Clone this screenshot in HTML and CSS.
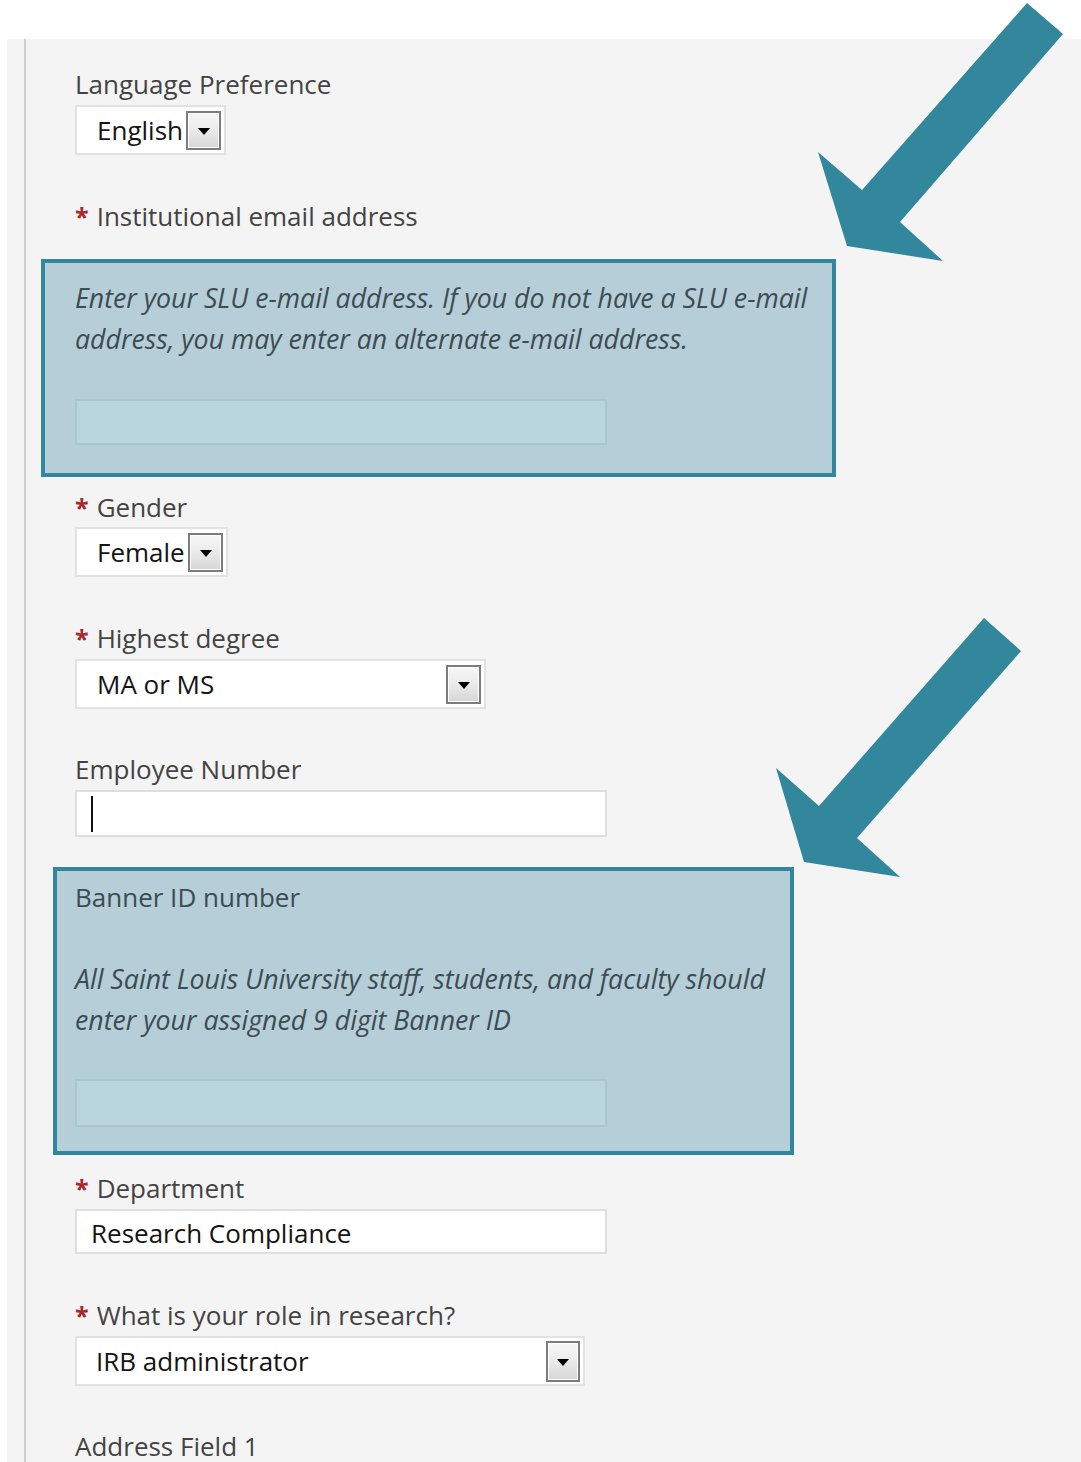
FILE: index.html
```html
<!DOCTYPE html>
<html lang="en">
<head>
<meta charset="utf-8">
<title>Profile details</title>
<link rel="stylesheet" href="styles.css">
</head>
<body>
<main class="page">
  <div class="rail">
    <div class="field field-first">
      <label class="label">Language Preference</label>
      <div class="select w-lang"><span class="select-value">English</span><span class="select-btn"></span></div>
    </div>

    <div class="field">
      <label class="label"><span class="req">*</span>Institutional email address</label>
    </div>

    <div class="callout callout-email">
      <p class="help">Enter your SLU e-mail address. If you do not have a SLU e-mail address, you may enter an alternate e-mail address.</p>
      <div class="input input-tinted input-email"></div>
    </div>

    <div class="field field-after-callout">
      <label class="label"><span class="req">*</span>Gender</label>
      <div class="select w-gender"><span class="select-value">Female</span><span class="select-btn"></span></div>
    </div>

    <div class="field">
      <label class="label"><span class="req">*</span>Highest degree</label>
      <div class="select w-degree"><span class="select-value">MA or MS</span><span class="select-btn"></span></div>
    </div>

    <div class="field field-employee">
      <label class="label">Employee Number</label>
      <div class="input input-employee"><span class="caret"></span></div>
    </div>

    <div class="callout callout-banner">
      <label class="label label-callout">Banner ID number</label>
      <p class="help help-banner">All Saint Louis University staff, students, and faculty should enter your assigned 9 digit Banner ID</p>
      <div class="input input-tinted input-banner"></div>
    </div>

    <div class="field field-dept">
      <label class="label"><span class="req">*</span>Department</label>
      <div class="input input-dept"><span class="input-value">Research Compliance</span></div>
    </div>

    <div class="field">
      <label class="label"><span class="req">*</span>What is your role in research?</label>
      <div class="select w-role"><span class="select-value select-value-role">IRB administrator</span><span class="select-btn btn-role"></span></div>
    </div>

    <div class="field field-address">
      <label class="label">Address Field 1</label>
    </div>
  </div>
</main>

<svg class="arrows" width="1081" height="1462" viewBox="0 0 1081 1462" aria-hidden="true">
  <polygon class="arrow" points="1027,3 1063,34 900,222 943,261 847,246 818,152 862,190"/>
  <polygon class="arrow" points="984,618 1021,651 857,838 900,877 804,862 776,768 819,806"/>
</svg>
</body>
</html>
```

FILE: styles.css
```css
html, body {
  margin: 0;
  padding: 0;
  overflow: hidden;
}

body {
  background: #ffffff;
  font-family: "Open Sans", "Noto Sans", sans-serif;
  color: #3f3f3f;
  position: relative;
  height: 1462px;
}

.page {
  margin: 39px 0 0 7px;
  background: #f4f4f4;
  padding: 0 0 0 17px;
  height: calc(1462px - 39px);
}

.rail {
  border-left: 2px solid #cfcfcf;
  padding: 28px 0 60px 49px;
  height: 100%;
  box-sizing: border-box;
}

.field {
  margin-top: 44px;
}

.field-first {
  margin-top: 0;
}

.label {
  display: block;
  font-size: 26px;
  line-height: 34px;
  color: #434343;
}

.req {
  color: #a8262c;
  font-size: 25px;
  font-weight: 700;
  line-height: 1;
  margin-right: 8px;
}

/* drop-down lists */
.select {
  display: flex;
  align-items: center;
  box-sizing: border-box;
  height: 50px;
  margin-top: 4px;
  border: 2px solid #e2e2e2;
  background: #ffffff;
  padding: 0 3px 0 20px;
}

.select-value {
  flex: 1;
  font-size: 26px;
  color: #141414;
  white-space: nowrap;
}

.select-value-role {
  margin-left: -1px;
}

.select-btn {
  display: flex;
  align-items: center;
  justify-content: center;
  box-sizing: border-box;
  width: 35px;
  height: 39px;
  border: 2px solid #7c7c7c;
  box-shadow: inset 0 0 0 1px #ffffff;
  background: linear-gradient(#f7f7f7 0%, #ececec 45%, #d6d6d6 100%);
}

.select-btn::after {
  content: "";
  border-left: 6px solid transparent;
  border-right: 6px solid transparent;
  border-top: 7px solid #000000;
  margin-top: 2px;
}

.btn-role {
  width: 34px;
  height: 41px;
}

.w-lang { width: 151px; }
.w-gender { width: 153px; }
.w-degree { width: 411px; }
.w-role { width: 510px; }

/* text inputs */
.input {
  box-sizing: border-box;
  width: 532px;
  height: 46px;
  border: 2px solid #dedede;
  background: #ffffff;
  display: flex;
  align-items: center;
}

.input-tinted {
  background: #b9d6de;
  border-color: #a9c6cf;
}

.input-employee {
  height: 47px;
  margin-top: 4px;
  padding-left: 14px;
}

.caret {
  width: 2px;
  height: 36px;
  background: #111111;
}

.input-dept {
  height: 45px;
  margin-top: 4px;
  padding-left: 14px;
}

.input-value {
  font-size: 26px;
  color: #141414;
  margin-top: 2px;
}

/* highlighted call-out boxes */
.callout {
  box-sizing: border-box;
  border: 4px solid #32879d;
  background: #b5ced7;
}

.callout-email {
  margin: 26px 0 0 -34px;
  width: 795px;
  padding: 14px 0 28px 30px;
}

.callout-banner {
  margin: 30px 0 0 -22px;
  width: 741px;
  padding: 9px 0 24px 18px;
}

.help {
  margin: 0;
  font-size: 26.7px;
  line-height: 41px;
  font-style: italic;
  color: #3d4b52;
}

.help-banner {
  margin-top: 44px;
}

.label-callout {
  color: #3d4b52;
}

.input-email {
  margin-top: 40px;
}

.input-banner {
  margin-top: 39px;
  height: 48px;
}

.field-after-callout {
  margin-top: 13px;
}

.field-after-callout .select {
  margin-top: 3px;
}

.field-employee {
  margin-top: 43px;
}

.field-dept {
  margin-top: 16px;
}

.field-address {
  margin-top: 43px;
}

/* annotation arrows */
.arrows {
  position: absolute;
  top: 0;
  left: 0;
  pointer-events: none;
}

.arrow {
  fill: #32879d;
}
```
